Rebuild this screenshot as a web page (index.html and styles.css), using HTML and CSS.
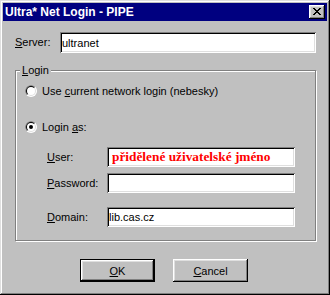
FILE: index.html
```html
<!DOCTYPE html>
<html lang="cs">

<head>
    <meta charset="UTF-8">
    <title>Ultra* Net Login - PIPE</title>
    <link rel="stylesheet" href="styles.css">
</head>

<body>
    <div class="window">
        <div class="titlebar">
            <span class="title">Ultra* Net Login - PIPE</span>
            <button class="close-btn" type="button">
                <svg width="8" height="7" viewBox="0 0 8 7" shape-rendering="crispEdges">
                    <path fill="#000" d="M0 0h2v1h-2z M6 0h2v1h-2z M1 1h2v1h-2z M5 1h2v1h-2z M2 2h4v1h-4z M3 3h2v1h-2z M2 4h4v1h-4z M1 5h2v1h-2z M5 5h2v1h-2z M0 6h2v1h-2z M6 6h2v1h-2z" />
                </svg>
            </button>
        </div>

        <div class="client">
            <div class="row server-row">
                <label class="label server-label"><u>S</u>erver:</label>
                <input class="edit server-edit" type="text" value="ultranet">
            </div>

            <div class="group">
                <span class="group-title"><u>L</u>ogin</span>

                <div class="radio-row">
                    <svg class="radio" width="12" height="12" viewBox="0 0 12 12">
                        <circle cx="6" cy="6" r="6" fill="#fff" />
                        <path fill="#808080" d="M10.243 1.757 A6 6 0 0 0 1.757 10.243 Z" />
                        <circle cx="6" cy="6" r="5" fill="#dfdfdf" />
                        <path fill="#000" d="M9.536 2.464 A5 5 0 0 0 2.464 9.536 Z" />
                        <circle cx="6" cy="6" r="4" fill="#fff" />
                    </svg>
                    <span>Use <u>c</u>urrent network login (nebesky)</span>
                </div>

                <div class="radio-row second">
                    <svg class="radio" width="12" height="12" viewBox="0 0 12 12">
                        <circle cx="6" cy="6" r="6" fill="#fff" />
                        <path fill="#808080" d="M10.243 1.757 A6 6 0 0 0 1.757 10.243 Z" />
                        <circle cx="6" cy="6" r="5" fill="#dfdfdf" />
                        <path fill="#000" d="M9.536 2.464 A5 5 0 0 0 2.464 9.536 Z" />
                        <circle cx="6" cy="6" r="4" fill="#fff" />
                        <circle cx="6" cy="6" r="2" fill="#000" />
                    </svg>
                    <span>Login <u>a</u>s:</span>
                </div>

                <div class="row field-row user-row">
                    <label class="label field-label"><u>U</u>ser:</label>
                    <input class="edit field-edit hint" type="text" value="přidělené uživatelské jméno">
                </div>

                <div class="row field-row password-row">
                    <label class="label field-label"><u>P</u>assword:</label>
                    <input class="edit field-edit" type="password" value="">
                </div>

                <div class="row field-row domain-row">
                    <label class="label field-label"><u>D</u>omain:</label>
                    <input class="edit field-edit" type="text" value="lib.cas.cz">
                </div>
            </div>

            <div class="buttons">
                <button class="btn default" type="button"><u>O</u>K</button>
                <button class="btn" type="button"><u>C</u>ancel</button>
            </div>
        </div>
    </div>
</body>

</html>
```

FILE: styles.css
```css
* {
    margin: 0;
    padding: 0;
    box-sizing: border-box;
}

body,
html {
    width: 330px;
    height: 295px;
    overflow: hidden;
    background: #c0c0c0;
    font-family: 'Liberation Sans', Arial, sans-serif;
    font-size: 11px;
    color: #000;
}

u {
    text-underline-offset: 1px;
}

/* window frame */
.window {
    width: 330px;
    height: 295px;
    padding: 3px;
    background: #c0c0c0;
    box-shadow: inset -1px -1px 0 #000, inset 1px 1px 0 #dfdfdf,
        inset -2px -2px 0 #808080, inset 2px 2px 0 #fff;
}

.titlebar {
    height: 18px;
    display: flex;
    align-items: center;
    justify-content: space-between;
    padding: 0 2px 0 2px;
    background: #000080;
}

.title {
    color: #fff;
    font-weight: 700;
    font-size: 12px;
    line-height: 18px;
    white-space: nowrap;
}

.close-btn {
    width: 16px;
    height: 14px;
    border: none;
    background: #c0c0c0;
    display: flex;
    align-items: center;
    justify-content: center;
    padding: 0 1px 1px 0;
    box-shadow: inset -1px -1px 0 #000, inset 1px 1px 0 #fff,
        inset -2px -2px 0 #808080, inset 2px 2px 0 #dfdfdf;
}

/* client area */
.client {
    padding: 11px 11px 0 12px;
}

.row {
    display: flex;
    align-items: center;
}

.label {
    line-height: 13px;
    white-space: nowrap;
}

.server-row {
    height: 21px;
}

.server-label {
    width: 45px;
}

.edit {
    border: none;
    outline: none;
    background: #fff;
    font-family: 'Liberation Sans', Arial, sans-serif;
    font-size: 11px;
    color: #000;
    padding: 0 2px;
    box-shadow: inset 1px 1px 0 #808080, inset -1px -1px 0 #fff,
        inset 2px 2px 0 #000, inset -2px -2px 0 #dfdfdf;
}

.server-edit {
    width: 256px;
    height: 21px;
}

/* login group box */
.group {
    position: relative;
    margin-top: 17px;
    padding: 14px 0 13px 9px;
    border: 1px solid #808080;
    box-shadow: 1px 1px 0 #fff, inset 1px 1px 0 #fff;
}

.group-title {
    position: absolute;
    top: -7px;
    left: 4px;
    padding: 0 2px;
    line-height: 13px;
    background: #c0c0c0;
}

.radio-row {
    display: flex;
    align-items: center;
    gap: 5px;
    height: 12px;
    line-height: 12px;
    white-space: nowrap;
}

.radio-row.second {
    margin-top: 24px;
}

.radio {
    flex: none;
}

.field-row {
    height: 20px;
    margin-left: 22px;
}

.user-row {
    margin-top: 14px;
}

.password-row {
    margin-top: 6px;
}

.domain-row {
    margin-top: 14px;
}

.field-label {
    width: 60px;
}

.field-edit {
    width: 188px;
    height: 20px;
}

.hint {
    color: #ff0000;
    font-family: 'Liberation Serif', 'Times New Roman', serif;
    font-weight: 700;
    font-size: 13.33px;
    padding-left: 5px;
}

/* dialog buttons */
.buttons {
    display: flex;
    justify-content: center;
    gap: 18px;
    margin-top: 18px;
    padding-right: 3px;
}

.btn {
    width: 75px;
    height: 23px;
    border: none;
    background: #c0c0c0;
    font-family: 'Liberation Sans', Arial, sans-serif;
    font-size: 11px;
    color: #000;
    box-shadow: inset -1px -1px 0 #000, inset 1px 1px 0 #fff,
        inset -2px -2px 0 #808080, inset 2px 2px 0 #dfdfdf;
}

.btn.default {
    border: 1px solid #000;
}
```
